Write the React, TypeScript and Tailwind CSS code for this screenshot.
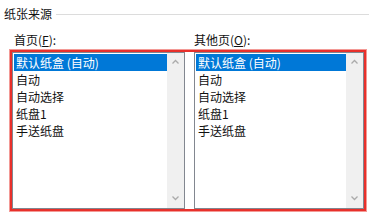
const items = ['默认纸盒 (自动)', '自动', '自动选择', '纸盘1', '手送纸盘'];

function Chevron({ down }: { down?: boolean }) {
  return (
    <svg width="9" height="6" viewBox="0 0 9 6" className="text-[#ababab]">
      <path
        d={down ? 'M1.5 1.5 L4.5 4.5 L7.5 1.5' : 'M1.5 4.5 L4.5 1.5 L7.5 4.5'}
        fill="none"
        stroke="currentColor"
        strokeWidth="1.3"
      />
    </svg>
  );
}

function ListBox({ width }: { width: string }) {
  return (
    <div className={`flex h-full ${width} border border-[#828790] bg-white`}>
      <ul className="flex-1 pt-px pl-px">
        {items.map((item, i) => (
          <li
            key={item}
            className={`h-[17px] pl-[2px] text-[12px] leading-[17px] whitespace-nowrap ${
              i === 0 ? 'bg-[#0078d7] text-white' : 'text-[#111]'
            }`}
          >
            {item}
          </li>
        ))}
      </ul>
      <div className="flex w-[17px] flex-col items-center justify-between bg-[#f0f0f0] pt-[6px] pb-[7px]">
        <Chevron />
        <Chevron down />
      </div>
    </div>
  );
}

export default function App() {
  return (
    <div
      className="h-[215px] w-[373px] overflow-hidden bg-white text-[#111]"
      style={{ fontFamily: '"Noto Sans CJK SC", "Microsoft YaHei", sans-serif' }}
    >
      <div className="flex items-center pt-[6px] pl-[4px] pr-[4px]">
        <span className="text-[12px] leading-[16px]">纸张来源</span>
        <div className="ml-[4px] h-px flex-1 bg-[#dcdcdc]" />
      </div>
      <div className="mt-[10px] flex pl-[14px] text-[12px] leading-[16px]">
        <span className="w-[180px]">
          首页(<span className="underline">F</span>):
        </span>
        <span>
          其他页(<span className="underline">O</span>):
        </span>
      </div>
      <div className="mt-[2px] ml-[10px] flex h-[161px] w-[356px] gap-[9px] border-2 border-[#e8302b] shadow-[0_0_0_1px_#f39a96]">
        <ListBox width="w-[173px]" />
        <ListBox width="w-[170px]" />
      </div>
    </div>
  );
}
